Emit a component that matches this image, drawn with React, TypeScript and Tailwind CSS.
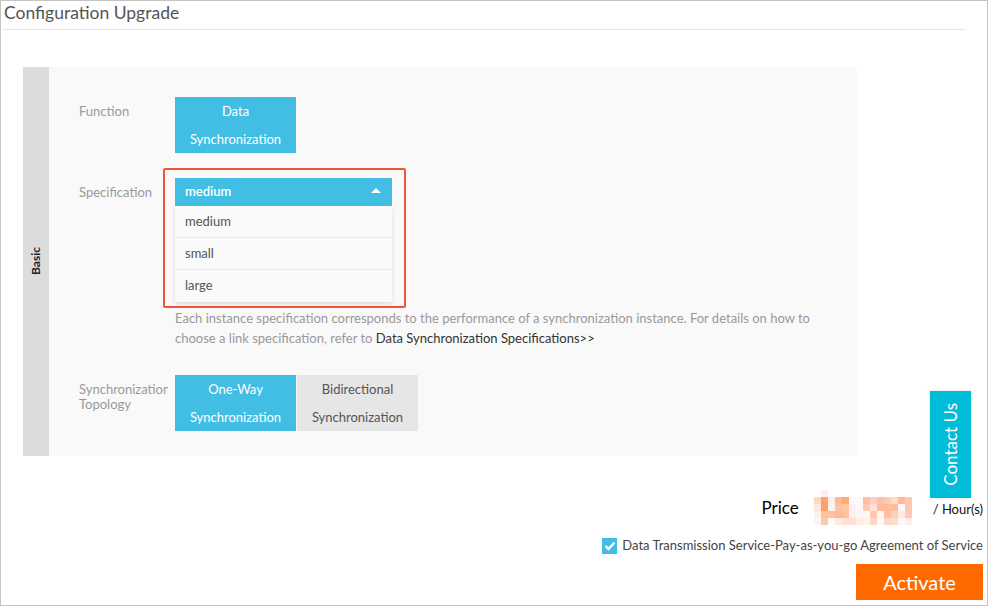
import React from "react";

const PRICE_PIXELS: string[][] = [
    ["#ffffff", "#fff0ec", "#ffffff", "#ffffff", "#ffffff", "#ffffff", "#ffffff", "#ffffff", "#ffffff", "#ffffff", "#ffffff", "#ffffff", "#ffffff", "#ffffff"],
    ["#ffd8c0", "#ffa070", "#ffeee8", "#ffb890", "#ffa878", "#fff8f6", "#fffaf8", "#ffc0a0", "#ffd0c8", "#ffc0a8", "#ffc8b8", "#ffdcc8", "#ffb898", "#ffc8b0"],
    ["#ffe8dc", "#ffa070", "#fff0e8", "#ffc0a8", "#ffc8a0", "#fff0f4", "#fff8f4", "#ffc8b0", "#ffe0d8", "#ffbc9c", "#ffbc9c", "#ffbc9c", "#fff8f8", "#ffc8b0"],
    ["#fff0e8", "#ffc0a0", "#ffc0a0", "#ffb898", "#ffc0a0", "#fff0ec", "#fff4f0", "#fff8f4", "#ffc8b0", "#fff4f0", "#ffc0a0", "#ffd0b8", "#ffe8e8", "#ffc8b8"],
    ["#fff4f0", "#ffc8b0", "#fffafa", "#ffe8dc", "#ffe0d8", "#ffe0d4", "#ffece4", "#fff0e8", "#ffd8c8", "#fff8f8", "#ffd8c8", "#ffdccc", "#fff8f8", "#ffeee8"],
];

function PricePixels() {
    return (
        <svg width="98" height="35" viewBox="0 0 98 35" className="block">
            {PRICE_PIXELS.map((row, r) =>
                row.map((c, i) => <rect key={`${r}-${i}`} x={i * 7} y={r * 7} width="7" height="7" fill={c} />)
            )}
        </svg>
    );
}

function OptionButton({ lines, active }: { lines: string[]; active?: boolean }) {
    return (
        <div
            className={
                active
                    ? "w-[121px] h-[56px] bg-[#42bde3] text-white flex flex-col items-center justify-center leading-[28px]"
                    : "w-[121px] h-[56px] bg-[#e6e6e6] text-[#555] flex flex-col items-center justify-center leading-[28px]"
            }
        >
            {lines.map((l) => (
                <span key={l}>{l}</span>
            ))}
        </div>
    );
}

export default function App() {
    return (
        <div
            className="relative w-[988px] h-[606px] bg-white border border-[#c4c4c4] overflow-hidden text-[13px]"
            style={{ fontFamily: "Lato, 'Liberation Sans', sans-serif" }}
        >
            {/* Header */}
            <div className="pl-[1px] h-[29px] text-[17.5px] text-[#555] leading-[24px] border-b border-[#dfe6ec] w-[962px] ml-[2px]">
                Configuration Upgrade
            </div>

            {/* Basic panel */}
            <div className="ml-[22px] mt-[37px] w-[834px] flex bg-[#f9f9f9]">
                <div className="w-[26px] bg-[#dcdcdc] flex items-center justify-center">
                    <span className="[writing-mode:vertical-rl] rotate-180 font-bold text-[12px] text-[#222]">Basic</span>
                </div>

                <div className="flex-1 pl-[30px] pt-[30px] pb-[25px]">
                    {/* Function */}
                    <div className="flex">
                        <div className="w-[96px] text-[#999] leading-[28px]">Function</div>
                        <OptionButton lines={["Data", "Synchronization"]} active />
                    </div>

                    {/* Specification */}
                    <div className="flex mt-[25px]">
                        <div className="w-[96px] text-[#999] leading-[28px]">Specification</div>
                        <div>
                            <div className="relative w-[217px]">
                                <div className="h-[28px] bg-[#42bde3] text-white font-semibold flex items-center justify-between pl-[10px] pr-[11px]">
                                    <span>medium</span>
                                    <span className="w-0 h-0 border-l-[5px] border-r-[5px] border-b-[5px] border-l-transparent border-r-transparent border-b-white mb-[3px]" />
                                </div>
                                <div className="bg-[#fafafa] shadow-[0_2px_4px_rgba(0,0,0,0.12)] text-[#555]">
                                    <div className="h-[32px] flex items-center pl-[10px] border-b border-[#e8e8e8]">medium</div>
                                    <div className="h-[32px] flex items-center pl-[10px] border-b border-[#e8e8e8]">small</div>
                                    <div className="h-[32px] flex items-center pl-[10px]">large</div>
                                </div>
                                {/* Highlight frame */}
                                <div className="absolute left-[-12px] top-[-10px] w-[243px] h-[140px] border-2 border-[#f0553a] rounded-[2px]" />
                            </div>
                            <div className="mt-[6px] text-[#999] leading-[20px] w-[660px]">
                                <div>Each instance specification corresponds to the performance of a synchronization instance. For details on how to</div>
                                <div>
                                    choose a link specification, refer to <span className="text-[#333]">Data Synchronization Specifications&gt;&gt;</span>
                                </div>
                            </div>
                        </div>
                    </div>

                    {/* Topology */}
                    <div className="flex mt-[27px]">
                        <div className="w-[96px] text-[#999] leading-[15px] pt-[7px]">
                            <div className="w-[89px] overflow-hidden whitespace-nowrap">Synchronization</div>
                            <div>Topology</div>
                        </div>
                        <OptionButton lines={["One-Way", "Synchronization"]} active />
                        <div className="ml-[1px]">
                            <OptionButton lines={["Bidirectional", "Synchronization"]} />
                        </div>
                    </div>
                </div>
            </div>

            {/* Footer */}
            <div className="pr-[4px] mt-[34px] flex flex-col items-end">
                <div className="flex items-center">
                    <span className="text-[17px] text-black mr-[15px]">Price</span>
                    <PricePixels />
                    <span className="ml-[21px] text-[13px] text-[#111] mt-[4px]">/ Hour(s)</span>
                </div>
                <div className="flex items-center mt-[11px]">
                    <span className="w-[15px] h-[16px] bg-[#42bde3] flex items-center justify-center mr-[5px]">
                        <svg width="12" height="10" viewBox="0 0 12 10">
                            <path d="M1.5 5 L4.5 8 L10.5 1.5" stroke="white" strokeWidth="2.4" fill="none" />
                        </svg>
                    </span>
                    <span className="text-[#444]">Data Transmission Service-Pay-as-you-go Agreement of Service</span>
                </div>
                <button className="mt-[8px] w-[127px] h-[36px] bg-[#ff6a00] text-white text-[20px] flex items-center justify-center">
                    Activate
                </button>
            </div>

            {/* Floating Contact Us */}
            <div className="absolute left-[929px] top-[390px] w-[41px] h-[107px] bg-[#00bcd9] shadow-[0_0_3px_rgba(0,0,0,0.15)] flex items-center justify-center">
                <span className="[writing-mode:vertical-rl] rotate-180 text-white text-[17px]">Contact Us</span>
            </div>
        </div>
    );
}
